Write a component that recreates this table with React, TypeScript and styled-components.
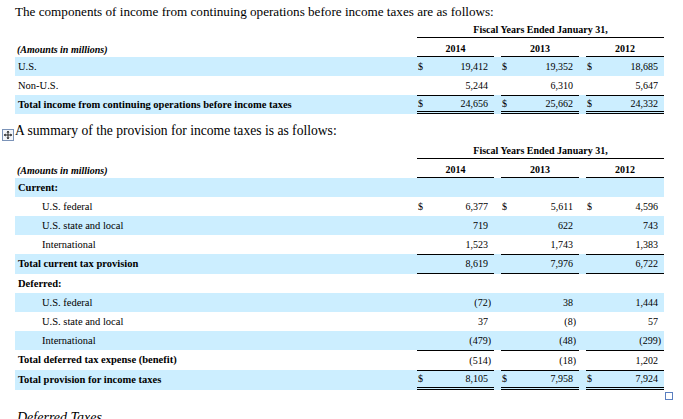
import { Fragment } from 'react'
import styled, { createGlobalStyle } from 'styled-components'

type Row = {
    label: string
    shaded?: boolean
    bold?: boolean
    indent?: boolean
    dollar?: boolean
    values?: string[]
    ruleTop?: boolean
    ruleBottom?: 'single' | 'double'
}

const incomeRows: Row[] = [
    { label: 'U.S.', shaded: true, dollar: true, values: ['19,412', '19,352', '18,685'] },
    { label: 'Non-U.S.', values: ['5,244', '6,310', '5,647'] },
    { label: 'Total income from continuing operations before income taxes', shaded: true, bold: true, dollar: true, values: ['24,656', '25,662', '24,332'], ruleTop: true, ruleBottom: 'double' },
]

const provisionRows: Row[] = [
    { label: 'Current:', shaded: true, bold: true },
    { label: 'U.S. federal', indent: true, dollar: true, values: ['6,377', '5,611', '4,596'] },
    { label: 'U.S. state and local', indent: true, shaded: true, values: ['719', '622', '743'] },
    { label: 'International', indent: true, values: ['1,523', '1,743', '1,383'] },
    { label: 'Total current tax provision', shaded: true, bold: true, values: ['8,619', '7,976', '6,722'], ruleTop: true, ruleBottom: 'single' },
    { label: 'Deferred:', bold: true },
    { label: 'U.S. federal', indent: true, shaded: true, values: ['(72)', '38', '1,444'] },
    { label: 'U.S. state and local', indent: true, values: ['37', '(8)', '57'] },
    { label: 'International', indent: true, shaded: true, values: ['(479)', '(48)', '(299)'] },
    { label: 'Total deferred tax expense (benefit)', bold: true, values: ['(514)', '(18)', '1,202'], ruleTop: true },
    { label: 'Total provision for income taxes', shaded: true, bold: true, dollar: true, values: ['8,105', '7,958', '7,924'], ruleTop: true, ruleBottom: 'double' },
]

const years = ['2014', '2013', '2012']

// widths of: label, then ($, amount, gap) x 3
const colWidths = [402, 12, 65, 7, 12, 66, 7, 12, 66]

function Amount({ value }: { value: string }) {
    if (value.endsWith(')')) {
        return <>{value.slice(0, -1)}<Paren>)</Paren></>
    }
    return <>{value}</>
}

function Header() {
    return (
        <>
            <tr>
                <td />
                <Heading colSpan={8}>Fiscal Years Ended January 31,</Heading>
            </tr>
            <tr>
                <Amounts>(Amounts in millions)</Amounts>
                {years.map((y, i) => (
                    <Fragment key={y}>
                        {i > 0 && <td />}
                        <Year colSpan={2}>{y}</Year>
                    </Fragment>
                ))}
            </tr>
        </>
    )
}

function FinTable({ rows, tallRules }: { rows: Row[]; tallRules?: boolean }) {
    return (
        <Table>
            <colgroup>
                {colWidths.map((w, i) => <col key={i} style={{ width: w }} />)}
            </colgroup>
            <tbody>
                <Header />
                {rows.map((r, ri) => (
                    <Tr key={ri} $shaded={r.shaded} $tall={tallRules && r.ruleTop}>
                        <Label $bold={r.bold} $indent={r.indent}>{r.label}</Label>
                        {[0, 1, 2].map((i) => (
                            <Fragment key={i}>
                                {i > 0 && <td />}
                                <Dollar $top={!!r.values && r.ruleTop} $bottom={r.ruleBottom}>{r.dollar ? '$' : ''}</Dollar>
                                <Num $top={!!r.values && r.ruleTop} $bottom={r.ruleBottom}>
                                    {r.values ? <Amount value={r.values[i]} /> : ''}
                                </Num>
                            </Fragment>
                        ))}
                    </Tr>
                ))}
            </tbody>
        </Table>
    )
}

export default function App() {
    return (
        <>
            <GlobalStyle />
            <Page>
                <Para $size={13.15}>The components of income from continuing operations before income taxes are as follows:</Para>
                <FinTable rows={incomeRows} />
                <Para $size={13.6} $gap={9}>
                    <MoveHandle>
                        <svg width="12" height="12" viewBox="0 0 12 12">
                            <rect x="0.5" y="0.5" width="11" height="11" fill="#f4f6fa" stroke="#7b93b8" />
                            <path d="M6 2.2v7.6M2.2 6h7.6" stroke="#222" strokeWidth="1" />
                            <path d="M6 1.8l-1.6 1.8h3.2zM6 10.2l-1.6-1.8h3.2zM1.8 6l1.8-1.6v3.2zM10.2 6l-1.8-1.6v3.2z" fill="#222" />
                        </svg>
                    </MoveHandle>
                    A summary of the provision for income taxes is as follows:
                </Para>
                <TableWrap>
                    <FinTable rows={provisionRows} tallRules />
                    <ResizeHandle />
                </TableWrap>
                <SubHead>Deferred Taxes</SubHead>
            </Page>
        </>
    )
}

const GlobalStyle = createGlobalStyle`
    body {
        margin: 0;
        background: #fff;
        color: #000;
        font-family: "Liberation Serif", "Times New Roman", serif;
    }
`

const Page = styled.div`
    position: relative;
    width: 683px;
    height: 419px;
    overflow: hidden;
    padding-left: 15px;
    box-sizing: border-box;
`

const Para = styled.p<{ $gap?: number; $size: number }>`
    position: relative;
    margin: ${({ $gap }) => $gap ?? 0}px 0 0;
    padding-top: ${({ $gap }) => ($gap ? 0 : 4)}px;
    font-size: ${({ $size }) => $size}px;
    line-height: 16px;
`

const MoveHandle = styled.span`
    position: absolute;
    left: -13px;
    top: 6px;
    width: 12px;
    height: 12px;
    display: flex;
`

const TableWrap = styled.div`
    position: relative;
    margin-top: 2px;
`

const ResizeHandle = styled.div`
    position: absolute;
    left: 650px;
    bottom: -10px;
    width: 6px;
    height: 6px;
    border: 1px solid #5a7fc0;
    background: #fff;
`

const SubHead = styled.p`
    margin: 20px 0 0 2px;
    font-size: 14px;
    font-style: italic;
    line-height: 16px;
`

const Table = styled.table`
    border-collapse: separate;
    border-spacing: 0;
    table-layout: fixed;
    width: 649px;
    font-size: 10px;
    line-height: 12px;

    td {
        padding: 0;
        white-space: nowrap;
    }
`

const Heading = styled.td`
    height: 18px;
    box-sizing: border-box;
    vertical-align: bottom;
    text-align: center;
    font-weight: bold;
    border-bottom: 1px solid #000;
    padding-bottom: 1px !important;
`

const Amounts = styled.td`
    height: 19px;
    box-sizing: border-box;
    vertical-align: bottom;
    padding: 0 0 1px 2px !important;
    font-weight: bold;
    font-style: italic;
`

const Year = styled.td`
    vertical-align: bottom;
    text-align: center;
    font-weight: bold;
    border-bottom: 1px solid #000;
    padding-bottom: 1px !important;
`

const Tr = styled.tr<{ $shaded?: boolean; $tall?: boolean }>`
    height: ${({ $tall }) => ($tall ? 20 : 19)}px;
    background: ${({ $shaded }) => ($shaded ? '#cceeff' : 'transparent')};
`

const Label = styled.td<{ $bold?: boolean; $indent?: boolean }>`
    padding-left: ${({ $indent }) => ($indent ? 27 : 3)}px !important;
    font-size: 10.5px;
    font-weight: ${({ $bold }) => ($bold ? 'bold' : 'normal')};
`

type RuleProps = { $top?: boolean; $bottom?: 'single' | 'double' }

const Dollar = styled.td<RuleProps>`
    padding-left: 1px !important;
    border-top: ${({ $top }) => ($top ? '1px solid #000' : 'none')};
    border-bottom: ${({ $bottom }) => ($bottom === 'double' ? '3px double #000' : $bottom === 'single' ? '1px solid #000' : 'none')};
`

const Num = styled(Dollar)`
    text-align: right;
    padding: 0 6px 0 0 !important;
`

const Paren = styled.span`
    margin-right: -3px;
`
